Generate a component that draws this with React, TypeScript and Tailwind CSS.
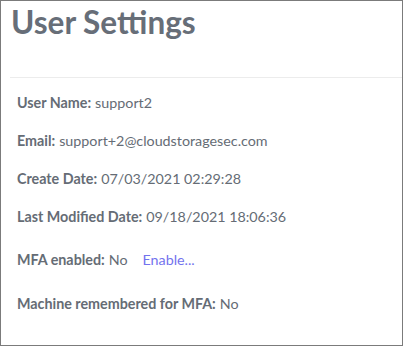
export default function App() {
  const rows: { label: string; value: string; link?: string; mt: string }[] = [
    { label: "User Name:", value: "support2", mt: "mt-[16px]" },
    { label: "Email:", value: "support+2@cloudstoragesec.com", mt: "mt-[20px]" },
    { label: "Create Date:", value: "07/03/2021 02:29:28", mt: "mt-[20px]" },
    { label: "Last Modified Date:", value: "09/18/2021 18:06:36", mt: "mt-[20px]" },
    { label: "MFA enabled:", value: "No", link: "Enable...", mt: "mt-[25px]" },
    { label: "Machine remembered for MFA:", value: "No", mt: "mt-[26px]" },
  ];
  return (
    <div
      className="w-[403px] h-[346px] border border-[#7b7b7b] bg-white text-[#656c75] overflow-hidden"
      style={{ fontFamily: "Lato, 'Noto Sans', sans-serif" }}
    >
      <h1 className="pl-[10px] pt-[2px] text-[31.5px] leading-[38px] font-bold text-[#676e78]">User Settings</h1>
      <div className="ml-[9px] mt-[36px] h-px bg-[#ececec]" />
      <div className="pl-[16px]">
        {rows.map((r) => (
          <div key={r.label} className={`${r.mt} text-[14.3px] leading-[18px] flex`}>
            <span className="font-bold">{r.label}</span>
            <span className="ml-[4px]">{r.value}</span>
            {r.link && <span className="ml-[15px] text-[#7373ee]">{r.link}</span>}
          </div>
        ))}
      </div>
    </div>
  );
}
